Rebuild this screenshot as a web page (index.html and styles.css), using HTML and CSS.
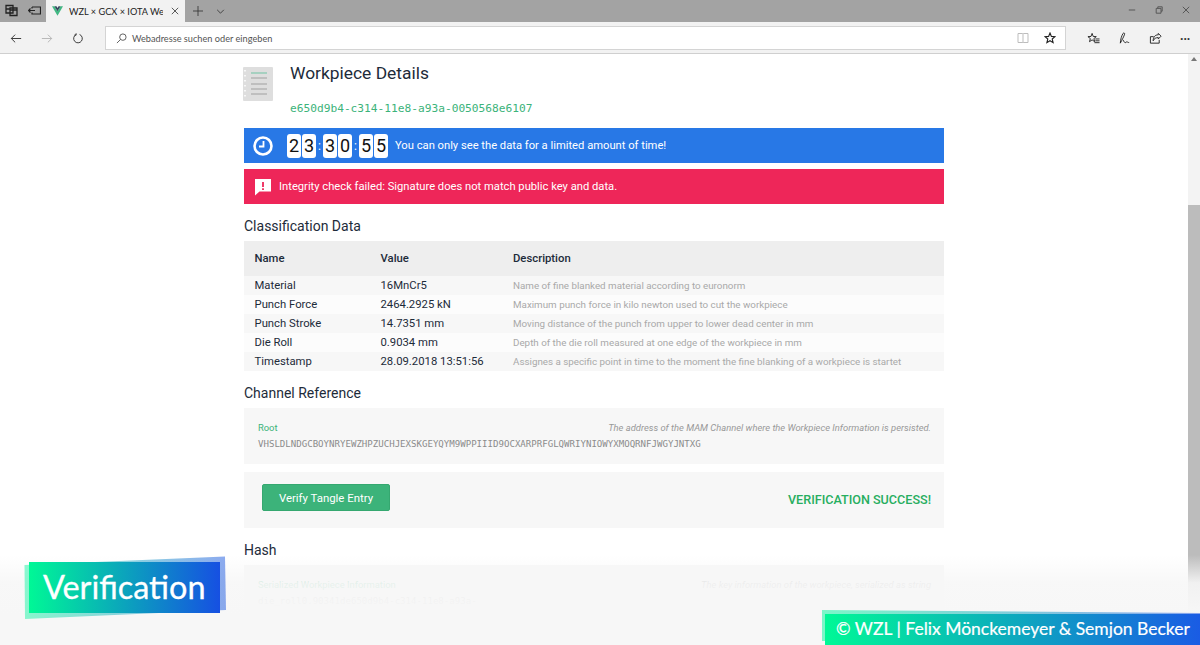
FILE: index.html
```html
<!DOCTYPE html>
<html lang="de">
<head>
<meta charset="utf-8">
<title>WZL × GCX × IOTA Web</title>
<link rel="stylesheet" href="styles.css">
</head>
<body>
<div class="tabbar">
  <div class="tab-tools">
    <svg class="ico" viewBox="0 0 13 13"><path d="M1 1.500h7v2.500h4v7.500H5V9H1zM5 4h3v5H5zM1 5h4M5 6h7" fill="none" stroke="#222" stroke-width="1.300"/></svg>
    <svg class="ico" viewBox="0 0 13 13"><path d="M4 3h8.500v7H4V8.500M4 4.500V3M.5 6.500H7M2.500 4.500l-2 2 2 2" fill="none" stroke="#222" stroke-width="1.200"/></svg>
  </div>
  <div class="tab">
    <svg class="vue" viewBox="0 0 16 14"><path d="M0 0h3.500L8 7.500 12.500 0H16L8 14z" fill="#41b883"/><path d="M3.500 0h3L8 2.600 9.500 0h3L8 7.500z" fill="#35495e"/></svg>
    <span class="tab-title">WZL × GCX × IOTA Web</span>
    <svg class="tab-x" viewBox="0 0 10 10"><path d="M1 1l8 8M9 1l-8 8" stroke="#333" stroke-width="1"/></svg>
  </div>
  <div class="tab-actions">
    <svg class="plus" viewBox="0 0 12 12"><path d="M6 0v12M0 6h12" stroke="#333" stroke-width="1"/></svg>
    <svg class="chev" viewBox="0 0 10 6"><path d="M1 1l4 4 4-4" fill="none" stroke="#333" stroke-width="1"/></svg>
  </div>
  <div class="win-controls">
    <svg class="win" viewBox="0 0 10 10"><path d="M1 5h8" stroke="#555" stroke-width="1.200"/></svg>
    <svg class="win" viewBox="0 0 10 10"><path d="M1.500 3h6v6h-6zM3.500 3V1h5.500v5.500H7.500" fill="none" stroke="#555" stroke-width="1.200"/></svg>
    <svg class="win" viewBox="0 0 10 10"><path d="M1 1l8 8M9 1l-8 8" stroke="#555" stroke-width="1.200"/></svg>
  </div>
</div>
<div class="toolbar">
  <div class="nav">
    <svg class="nav-ico" viewBox="0 0 14 12"><path d="M13 6H1.500M6 1.500 1.500 6 6 10.500" fill="none" stroke="#333" stroke-width="1.100"/></svg>
    <svg class="nav-ico" viewBox="0 0 14 12"><path d="M1 6h11.500M8 1.500 12.500 6 8 10.500" fill="none" stroke="#b5b5b5" stroke-width="1.100"/></svg>
    <svg class="nav-ico" viewBox="0 0 14 14"><path d="M4.500 2.100A5.500 5.500 0 1 0 9 1.900M4.600 .4v2.300H2.300" fill="none" stroke="#333" stroke-width="1.200"/></svg>
  </div>
  <div class="address">
    <svg class="search" viewBox="0 0 12 12"><circle cx="7.500" cy="4.500" r="3.500" fill="none" stroke="#555"/><path d="M5 7 1 11" stroke="#555"/></svg>
    <span class="address-text">Webadresse suchen oder eingeben</span>
    <svg class="book" viewBox="0 0 12 12"><path d="M1 1.500h4.500c.3 0 .5.200.5.500 0-.3.200-.5.500-.5H11v9H6.500c-.3 0-.5.200-.5.500 0-.3-.2-.5-.5-.5H1zM6 2v9" fill="none" stroke="#bdbdbd"/></svg>
    <svg class="star" viewBox="0 0 12 12"><path d="M6 1l1.400 3.400 3.600.3-2.800 2.300.9 3.600L6 8.700l-3.100 1.900.9-3.600L1 4.700l3.600-.3z" fill="none" stroke="#222" stroke-width="1.100"/></svg>
  </div>
  <div class="tools">
    <svg class="tool" viewBox="0 0 14 14"><path d="M5.500 1.500 6.700 4.800l3.300.2-2.600 2.100.9 3.300-2.800-1.900-2.800 1.900.9-3.300L1 5l3.300-.2z" fill="none" stroke="#222"/><path d="M9 7.500h4.500M9 9.500h4.500M8 11.500h5.500" stroke="#222"/></svg>
    <svg class="tool" viewBox="0 0 14 14"><path d="M2.500 12c.2-4 1.300-8 3-10.500.7-1 2-.3 1.600.9C6.300 5 4.500 8 2.500 12zM5.500 8.500c.7 1.500 1.300 2.800 2.300 3 1 .1 1-1 1.700-1s1 1 2.500.8" fill="none" stroke="#222"/></svg>
    <svg class="tool" viewBox="0 0 14 14"><path d="M10 1.500 13 4.500l-3 3V6C7.500 6 5.500 7 4.500 9.500 4.500 5.500 6.500 3 10 3zM11 8.500V12H1.500V5H5" fill="none" stroke="#222"/></svg>
    <span class="more">···</span>
  </div>
</div>
<div class="viewport">
  <main class="content">
    <header class="head">
      <svg class="doc" viewBox="0 0 30 34">
        <rect width="30" height="34" rx="1" fill="#dedede"/>
        <path d="M8 6h16" stroke="#6fc3a3"/>
        <path d="M8 11h16M8 17h16M8 22h16M8 27h16" stroke="#a0a0a0"/>
        <path d="M2 3v28" stroke="#fff" stroke-width="1.500" stroke-dasharray="1.500 3.500"/>
      </svg>
      <div>
        <h1>Workpiece Details</h1>
        <div class="uuid">e650d9b4-c314-11e8-a93a-0050568e6107</div>
      </div>
    </header>
    <div class="banner blue">
      <svg class="clock" viewBox="0 0 20 20"><circle cx="10" cy="10" r="8.500" fill="none" stroke="#fff" stroke-width="2.600"/><path d="M10.500 5v5.500H6" fill="none" stroke="#fff" stroke-width="1.800"/></svg>
      <div class="timer">
        <span class="digit">2</span><span class="digit">3</span><span class="sep">:</span><span class="digit">3</span><span class="digit">0</span><span class="sep">:</span><span class="digit">5</span><span class="digit">5</span>
      </div>
      <span>You can only see the data for a limited amount of time!</span>
    </div>
    <div class="banner red">
      <svg class="alert" viewBox="0 0 18 18"><path d="M1 1h16v12.500H5.500L1 17.500z" fill="#fff"/><path d="M9 4v5M9 10.300v1.700" stroke="#ee2659" stroke-width="1.800"/></svg>
      <span>Integrity check failed: Signature does not match public key and data.</span>
    </div>
    <h2>Classification Data</h2>
    <table class="data">
      <thead><tr><th class="c1">Name</th><th class="c2">Value</th><th class="c3">Description</th></tr></thead>
      <tbody>
        <tr><td>Material</td><td>16MnCr5</td><td class="desc">Name of fine blanked material according to euronorm</td></tr>
        <tr><td>Punch Force</td><td>2464.2925 kN</td><td class="desc">Maximum punch force in kilo newton used to cut the workpiece</td></tr>
        <tr><td>Punch Stroke</td><td>14.7351 mm</td><td class="desc">Moving distance of the punch from upper to lower dead center in mm</td></tr>
        <tr><td>Die Roll</td><td>0.9034 mm</td><td class="desc">Depth of the die roll measured at one edge of the workpiece in mm</td></tr>
        <tr><td>Timestamp</td><td>28.09.2018 13:51:56</td><td class="desc">Assignes a specific point in time to the moment the fine blanking of a workpiece is startet</td></tr>
      </tbody>
    </table>
    <h2>Channel Reference</h2>
    <section class="panel">
      <div class="panel-row"><span class="label">Root</span><em>The address of the MAM Channel where the Workpiece Information is persisted.</em></div>
      <div class="mono">VHSLDLNDGCBOYNRYEWZHPZUCHJEXSKGEYQYM9WPPIIID9OCXARPRFGLQWRIYNIOWYXMOQRNFJWGYJNTXG</div>
    </section>
    <section class="panel verify">
      <button class="btn">Verify Tangle Entry</button>
      <strong class="success">VERIFICATION SUCCESS!</strong>
    </section>
    <h2>Hash</h2>
    <section class="panel">
      <div class="panel-row"><span class="label">Serialized Workpiece Information</span><em>The key information of the workpiece, serialized as string</em></div>
      <div class="mono">die_roll0.90341de650d9b4-c314-11e8-a93a-</div>
    </section>
  </main>
  <div class="scrollbar"><span class="arrow"></span><div class="thumb"></div></div>
</div>
<div class="fade"></div>
<svg class="badge-bg" viewBox="0 0 202 64" aria-hidden="true">
  <defs><linearGradient id="bg1"><stop offset="0" stop-color="#00f59a" stop-opacity=".45"/><stop offset="1" stop-color="#1a56e0" stop-opacity=".5"/></linearGradient></defs>
  <path d="M.5 9 201 .5l1 53.500L1 63z" fill="url(#bg1)"/>
</svg>
<div class="badge">Verification</div>
<div class="credit-bg"></div>
<div class="credit">© WZL | Felix Mönckemeyer &amp; Semjon Becker</div>
</body>
</html>
```
FILE: styles.css
```css
* { box-sizing: border-box; }
html, body { margin: 0; height: 100%; }
body {
  width: 1200px; height: 645px; overflow: hidden; position: relative;
  display: flex; flex-direction: column;
  font-family: Roboto, "Liberation Sans", sans-serif; color: #1d2b3a; background: #fff;
}
.tabbar { height: 22px; flex: none; display: flex; background: #a3a3a3; }
.tab-tools { width: 46px; display: flex; gap: 10px; padding: 4px 0 0 5px; }
.ico { width: 13px; height: 13px; }
.tab {
  width: 139px; display: flex; align-items: center; background: #f2f2f2; padding-left: 6px;
}
.vue { width: 11px; height: 10px; flex: none; }
.tab-title {
  font: 9.200px Lato, sans-serif; color: #222; width: 94px; margin-left: 6px;
  overflow: hidden; white-space: nowrap;
}
.tab-x { width: 8px; height: 8px; margin-left: 8px; }
.tab-actions { display: flex; align-items: center; gap: 13px; padding-left: 8px; width: 60px; }
.plus { width: 10px; height: 10px; flex: none; }
.chev { width: 9px; height: 5px; flex: none; }
.win-controls { margin-left: auto; display: flex; gap: 19px; padding: 6px 10px 0 0; }
.win { width: 8px; height: 8px; }
.toolbar {
  height: 32px; flex: none; display: flex; align-items: center; background: #f2f2f2;
  border-bottom: 1px solid #cfcfcf; padding-top: 1px;
}
.nav { width: 105px; display: flex; align-items: center; gap: 19px; padding-left: 10px; }
.nav-ico { width: 12px; height: 11px; flex: none; }
.address {
  width: 961px; height: 24px; background: #fff; border: 1px solid #d4d4d4;
  display: flex; align-items: center; padding-left: 10px;
}
.search { width: 11px; height: 11px; flex: none; }
.address-text { font: 9.200px Lato, sans-serif; color: #555; margin-left: 5px; }
.book { width: 12px; height: 12px; margin-left: auto; }
.star { width: 12px; height: 12px; margin: 0 9px 0 15px; }
.tools { flex: 1; display: flex; align-items: center; gap: 18px; padding-left: 21px; }
.tool { width: 13px; height: 13px; flex: none; }
.more { font: bold 12px "Open Sans", sans-serif; color: #333; }
.viewport { flex: 1; display: flex; min-height: 0; overflow: hidden; }
.content { width: 700px; margin-left: 244px; flex: none; padding-top: 9px; }
.head { display: flex; gap: 17px; margin-left: -1px; height: 65px; }
.doc { width: 30px; height: 34px; margin-top: 4px; flex: none; }
h1 { font-size: 17.400px; font-weight: 400; line-height: 20px; margin: 0 0 19px; color: #1d2b3a; }
.uuid { font: 11.200px/14px "DejaVu Sans Mono", monospace; color: #3cb37a; }
.banner {
  display: flex; align-items: center; height: 35px; color: #fff; font-size: 11.200px;
}
.blue { background: #2878e6; margin-bottom: 6px; padding-left: 9px; }
.red { background: #ee2659; padding-left: 10px; }
.clock { width: 20px; height: 20px; flex: none; }
.timer { display: flex; margin: 0 6px 0 14px; align-items: center; }
.digit {
  width: 14px; height: 24px; background: #fff; color: #111; border-radius: 3px;
  font-size: 18px; line-height: 24px; text-align: center; margin-right: 1px;
}
.sep { width: 5px; margin-right: 1px; font-size: 12px; color: #fff; text-align: center; }
.alert { width: 18px; height: 18px; margin-right: 7px; flex: none; }
h2 { font-size: 14px; font-weight: 400; line-height: 18px; margin: 13px 0 6px; color: #1d2b3a; }
.data { width: 700px; border-collapse: collapse; font-size: 11.300px; table-layout: fixed; }
.data th { height: 35px; background: #eee; text-align: left; padding: 0 0 0 10.500px; font-weight: 500; }
.c1 { width: 126px; }
.c2 { width: 133px; }
.data th.c3 { padding-left: 10px; }
.data td { height: 19px; padding: 0 0 0 10.500px; white-space: nowrap; }
.data tr:nth-child(odd) td { background: #f7f7f7; }
.data tr:nth-child(even) td { background: #fcfcfc; }
.data td.desc { color: #a9a9a9; font-size: 9.800px; padding-left: 10px; }
.panel { background: #f7f7f7; height: 56px; padding: 14px 13px 0 14px; margin-bottom: 8px; }
.panel-row { display: flex; justify-content: space-between; font-size: 9.400px; line-height: 12px; color: #999; }
.label { color: #3cb37a; }
.panel em { color: #999; }
.mono { font: 9.080px/12px "DejaVu Sans Mono", monospace; color: #8b8b8b; margin-top: 4px; white-space: nowrap; }
.verify { display: flex; align-items: flex-start; justify-content: space-between; padding: 12px 13px 0 18px; }
.btn {
  width: 128px; height: 27px; background: #3cb37a; color: #fff; border: 1px solid #35a870;
  border-radius: 2px; font: 11.400px Roboto, sans-serif; padding: 0;
}
.success { color: #27ae60; font-size: 12.600px; font-weight: 500; line-height: 32px; }
.scrollbar { width: 12px; margin-left: auto; background: #f3f3f3; display: flex; flex-direction: column; align-items: center; padding-top: 3px; }
.arrow { width: 0; height: 0; border: 3px solid transparent; border-top: 0; border-bottom: 4px solid #777; flex: none; margin-bottom: 144px; }
.thumb { flex: 1; width: 100%; background: #bcbcbc; }
.fade {
  position: absolute; left: 0; right: 0; top: 555px; bottom: 0;
  background: linear-gradient(to bottom, rgba(247,247,247,0) 0, rgba(247,247,247,.9) 28px, #f7f7f7 60px);
}
.badge-bg { position: absolute; left: 24px; top: 556px; width: 202px; height: 64px; }
.badge {
  position: absolute; left: 29px; top: 562px; width: 191px; height: 51px;
  background: linear-gradient(to right, #00f896, #1650e2);
  color: #fff; font: 32.400px/50px Lato, sans-serif; padding-left: 14px; white-space: nowrap;
  -webkit-text-stroke: .3px #fff;
}
.credit-bg {
  position: absolute; left: 822px; top: 610px; width: 378px; height: 31px; opacity: .5;
  background: linear-gradient(to right, #00f59a, #1650e2);
  clip-path: polygon(0 0, 100% 3px, 100% 100%, 0 100%);
}
.credit {
  position: absolute; left: 825px; top: 614px; width: 375px; height: 31px;
  background: linear-gradient(to right, #00f896, #1a5ce4);
  color: #fff; font: 17.500px/30px Lato, sans-serif; padding-left: 11px; white-space: nowrap;
  -webkit-text-stroke: .2px #fff;
}
```
